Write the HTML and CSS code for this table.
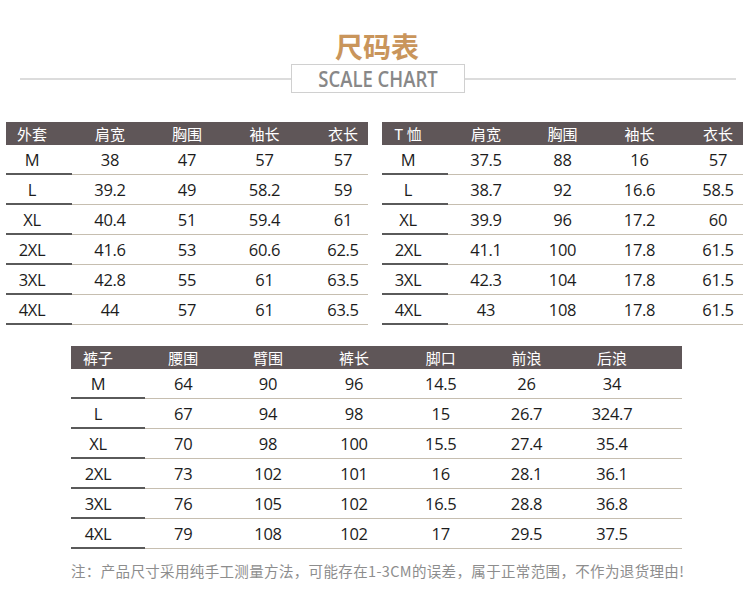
FILE: index.html
```html
<!DOCTYPE html>
<html lang="zh-CN">
<head>
<meta charset="utf-8">
<title>尺码表</title>
<link rel="stylesheet" href="styles.css">
</head>
<body>
<div class="page">
  <h1 class="title">尺码表</h1>
  <div class="subtitle">
    <span class="rule"></span>
    <div class="badge"><span class="badge-text">SCALE CHART</span></div>
    <span class="rule"></span>
  </div>

  <div class="pair">
    <div class="table t1">
      <div class="row head"><div>外套</div><div>肩宽</div><div>胸围</div><div>袖长</div><div>衣长</div></div>
      <div class="row"><div>M</div><div>38</div><div>47</div><div>57</div><div>57</div></div>
      <div class="row"><div>L</div><div>39.2</div><div>49</div><div>58.2</div><div>59</div></div>
      <div class="row"><div>XL</div><div>40.4</div><div>51</div><div>59.4</div><div>61</div></div>
      <div class="row"><div>2XL</div><div>41.6</div><div>53</div><div>60.6</div><div>62.5</div></div>
      <div class="row"><div>3XL</div><div>42.8</div><div>55</div><div>61</div><div>63.5</div></div>
      <div class="row"><div>4XL</div><div>44</div><div>57</div><div>61</div><div>63.5</div></div>
    </div>
    <div class="table t2">
      <div class="row head"><div>T 恤</div><div>肩宽</div><div>胸围</div><div>袖长</div><div>衣长</div></div>
      <div class="row"><div>M</div><div>37.5</div><div>88</div><div>16</div><div>57</div></div>
      <div class="row"><div>L</div><div>38.7</div><div>92</div><div>16.6</div><div>58.5</div></div>
      <div class="row"><div>XL</div><div>39.9</div><div>96</div><div>17.2</div><div>60</div></div>
      <div class="row"><div>2XL</div><div>41.1</div><div>100</div><div>17.8</div><div>61.5</div></div>
      <div class="row"><div>3XL</div><div>42.3</div><div>104</div><div>17.8</div><div>61.5</div></div>
      <div class="row"><div>4XL</div><div>43</div><div>108</div><div>17.8</div><div>61.5</div></div>
    </div>
  </div>

  <div class="table t3">
    <div class="row head"><div>裤子</div><div>腰围</div><div>臂围</div><div>裤长</div><div>脚口</div><div>前浪</div><div>后浪</div></div>
    <div class="row"><div>M</div><div>64</div><div>90</div><div>96</div><div>14.5</div><div>26</div><div>34</div></div>
    <div class="row"><div>L</div><div>67</div><div>94</div><div>98</div><div>15</div><div>26.7</div><div>324.7</div></div>
    <div class="row"><div>XL</div><div>70</div><div>98</div><div>100</div><div>15.5</div><div>27.4</div><div>35.4</div></div>
    <div class="row"><div>2XL</div><div>73</div><div>102</div><div>101</div><div>16</div><div>28.1</div><div>36.1</div></div>
    <div class="row"><div>3XL</div><div>76</div><div>105</div><div>102</div><div>16.5</div><div>28.8</div><div>36.8</div></div>
    <div class="row"><div>4XL</div><div>79</div><div>108</div><div>102</div><div>17</div><div>29.5</div><div>37.5</div></div>
  </div>

  <p class="note">注：产品尺寸采用纯手工测量方法，可能存在1-3CM的误差，属于正常范围，不作为退货理由!</p>
</div>
</body>
</html>
```

FILE: styles.css
```css
* { box-sizing: border-box; }

html, body {
  margin: 0;
  padding: 0;
  background: #ffffff;
}

.page {
  width: 750px;
  padding-top: 32px;
  font-family: "Open Sans", "Noto Sans CJK SC", sans-serif;
}

.title {
  margin: 0;
  text-align: center;
  font-family: "Noto Sans CJK SC", sans-serif;
  font-size: 28px;
  line-height: 28px;
  font-weight: 700;
  color: #c9955b;
  padding-left: 4px;
}

.subtitle {
  margin: 4px 14px 0 20px;
  display: flex;
  align-items: center;
}

.rule {
  flex: 1;
  height: 2px;
  background: #dcdcdc;
}

.badge {
  width: 174px;
  height: 29px;
  border: 1px solid #d0d0d0;
  display: flex;
  align-items: center;
  justify-content: center;
  overflow: hidden;
}

.badge-text {
  display: inline-block;
  font-family: "Open Sans", sans-serif;
  font-size: 22px;
  font-weight: 600;
  line-height: 27px;
  color: #888888;
  transform: scaleX(0.84);
  white-space: nowrap;
}

.pair {
  margin-top: 29px;
  display: flex;
  padding-left: 6px;
  gap: 14px;
}

.table {
  display: flex;
  flex-direction: column;
}

.row {
  display: grid;
  height: 30px;
  font-size: 16.5px;
  letter-spacing: -0.3px;
  color: #1c1c1c;
}

.row > div {
  display: flex;
  align-items: center;
  justify-content: center;
  border-bottom: 1px solid #c6beb0;
  white-space: nowrap;
}

.row > div:first-child {
  border-bottom: 2px solid #5a5a5a;
}

.row.head {
  height: 23px;
  background: #5f5658;
  color: #ffffff;
  font-family: "Noto Sans CJK SC", sans-serif;
  font-size: 15px;
  letter-spacing: 0;
}

.row.head > div,
.row.head > div:first-child {
  border-bottom: none;
}

.t1 { width: 362px; }
.t1 .row { grid-template-columns: 66px 76px 78px 77px 65px; }
.t1 .row > div:first-child { padding-right: 14px; }
.t1 .row > div:last-child { padding-left: 15px; }

.t2 { width: 361px; }
.t2 .row { grid-template-columns: 66px 76px 77px 77px 65px; }
.t2 .row > div:first-child { padding-right: 14px; }
.t2 .row > div:last-child { padding-left: 15px; }

.t3 {
  width: 611px;
  margin: 21px 0 0 71px;
}
.t3 .row { grid-template-columns: 74px 80.5px 85px 87px 86.5px 85px 113px; }
.t3 .row > div:first-child { padding-right: 20px; }
.t3 .row > div:nth-child(2) { padding-right: 4px; }
.t3 .row > div:last-child { padding-right: 27px; }

.note {
  margin: 12px 0 0 71px;
  font-family: "Noto Sans CJK SC", sans-serif;
  font-size: 14.5px;
  line-height: 20px;
  color: #8d8d8d;
  letter-spacing: 0.35px;
  white-space: nowrap;
}
```
